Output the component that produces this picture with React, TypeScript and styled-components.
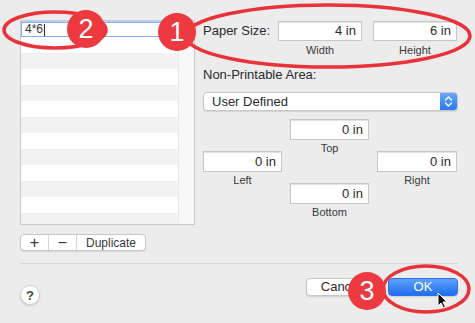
import React from "react";
import styled, { createGlobalStyle } from "styled-components";

const Global = createGlobalStyle`
  html, body { margin: 0; padding: 0; background: #ececec; }
  body { font-family: "Liberation Sans", Arial, sans-serif; color: #2a2a2a; }
  * { box-sizing: border-box; }
`;

const Window = styled.div`
  position: relative;
  width: 475px;
  height: 323px;
  overflow: hidden;
  background: #ececec;
  padding: 20px 17px 0 20px;
  display: flex;
  flex-direction: column;
`;

const MainRow = styled.div`
  display: flex;
  gap: 8px;
`;

const LeftCol = styled.div`
  width: 175px;
  display: flex;
  flex-direction: column;
`;

const ListBox = styled.div`
  height: 205px;
  border: 1px solid #cacaca;
  background: #fff;
  display: flex;
`;

const Rows = styled.div`
  flex: 1;
  display: flex;
  flex-direction: column;
  overflow: hidden;
`;

const EditRow = styled.div`
  margin-top: 1px;
  height: 16px;
  border: 1.5px solid #86aef0;
  box-shadow: 0 0 0 1px #b9d0f6;
  background: #fff;
  font-size: 12px;
  line-height: 13px;
  padding-left: 3px;
  display: flex;
  align-items: center;
  color: #333;
`;

const Caret = styled.span`
  display: inline-block;
  width: 1px;
  height: 12px;
  background: #222;
  margin-left: 1px;
`;

const Row = styled.div<{ $alt: boolean }>`
  height: 16px;
  flex: none;
  background: ${(p) => (p.$alt ? "#f2f2f2" : "#ffffff")};
`;

const Track = styled.div`
  width: 16px;
  background: #f8f8f8;
  border-left: 1px solid #e8e8e8;
`;

const Segmented = styled.div`
  margin-top: 9px;
  width: 126px;
  height: 17px;
  display: flex;
  background: #fff;
  border: 1px solid #c6c6c6;
  border-radius: 4px;
  box-shadow: 0 1px 1px rgba(0, 0, 0, 0.08);
  overflow: hidden;
`;

const Segment = styled.div<{ $w: number; $big?: boolean }>`
  width: ${(p) => p.$w}px;
  display: flex;
  align-items: center;
  justify-content: center;
  font-size: ${(p) => (p.$big ? 16 : 12)}px;
  color: #3a3a3a;
  border-right: 1px solid #d6d6d6;
  &:last-child { border-right: none; flex: 1; }
`;

const RightCol = styled.div`
  flex: 1;
  padding-top: 1px;
  display: flex;
  flex-direction: column;
`;

const PaperRow = styled.div`
  display: flex;
  align-items: flex-start;
`;

const RowLabel = styled.div`
  width: 75px;
  font-size: 13px;
  line-height: 20px;
  color: #2b2b2b;
`;

const FieldCol = styled.div<{ $w: number; $ml?: number }>`
  width: ${(p) => p.$w}px;
  margin-left: ${(p) => p.$ml ?? 0}px;
  display: flex;
  flex-direction: column;
`;

const Field = styled.div<{ $h: number }>`
  height: ${(p) => p.$h}px;
  background: #fff;
  border: 1px solid #c6c6c6;
  box-shadow: inset 0 1px 0 #e2e2e2;
  font-size: 13px;
  line-height: ${(p) => p.$h - 2}px;
  text-align: right;
  padding-right: 5px;
  color: #2b2b2b;
`;

const Caption = styled.div<{ $mt: number }>`
  margin-top: ${(p) => p.$mt}px;
  font-size: 11px;
  line-height: 14px;
  text-align: center;
  color: #3a3a3a;
`;

const SectionLabel = styled.div`
  margin-top: 11px;
  font-size: 13px;
  line-height: 14px;
  color: #2b2b2b;
`;

const Select = styled.div`
  margin-top: 10px;
  height: 19px;
  display: flex;
  background: #fff;
  border: 1px solid #c8c8c8;
  border-radius: 4px;
  box-shadow: 0 1px 1px rgba(0, 0, 0, 0.1);
  overflow: hidden;
`;

const SelectText = styled.div`
  flex: 1;
  padding-left: 8px;
  font-size: 13px;
  line-height: 17px;
  color: #2b2b2b;
`;

const Stepper = styled.div`
  width: 17px;
  background: linear-gradient(#6aa8fa, #2a78f0);
  display: flex;
  align-items: center;
  justify-content: center;
`;

const MarginGrid = styled.div`
  margin-top: 8px;
  display: grid;
  grid-template-columns: 79px 79px 80px;
  column-gap: 8px;
`;

const MarginCol = styled.div<{ $mt: number }>`
  margin-top: ${(p) => p.$mt}px;
  display: flex;
  flex-direction: column;
`;

const Spacer = styled.div<{ $h: number }>`
  height: ${(p) => p.$h}px;
`;

const Separator = styled.div`
  margin-top: 12px;
  height: 1px;
  background: #d3d3d3;
`;

const Footer = styled.div`
  display: flex;
  align-items: flex-start;
  padding-top: 14px;
`;

const Help = styled.div`
  margin-top: 7px;
  width: 20px;
  height: 20px;
  border-radius: 50%;
  background: #fff;
  border: 1px solid #cfcfcf;
  box-shadow: 0 1px 2px rgba(0, 0, 0, 0.15);
  display: flex;
  align-items: center;
  justify-content: center;
  font-size: 13px;
  font-weight: bold;
  color: #444;
`;

const Grow = styled.div`
  flex: 1;
`;

const Button = styled.div<{ $primary?: boolean }>`
  width: 70px;
  height: 18px;
  border-radius: 4px;
  font-size: 13px;
  line-height: 16px;
  text-align: center;
  margin-left: ${(p) => (p.$primary ? 12 : 0)}px;
  color: ${(p) => (p.$primary ? "#fff" : "#2b2b2b")};
  background: ${(p) =>
    p.$primary ? "linear-gradient(#5fa0fa, #1d6ff0)" : "#fff"};
  border: 1px solid ${(p) => (p.$primary ? "#2c72e6" : "#c6c6c6")};
  box-shadow: 0 1px 1px rgba(0, 0, 0, 0.12);
`;

const Overlay = styled.svg`
  position: absolute;
  left: 0;
  top: 0;
  width: 475px;
  height: 323px;
  pointer-events: none;
`;

const Badge = styled.div<{ $x: number; $y: number }>`
  position: absolute;
  left: ${(p) => p.$x - 19}px;
  top: ${(p) => p.$y - 19}px;
  width: 38px;
  height: 38px;
  border-radius: 50%;
  background: #ec3a40;
  color: #fff;
  font-family: "Liberation Sans", Arial, sans-serif;
  font-size: 27px;
  line-height: 38px;
  text-align: center;
`;

const Cursor = styled.svg`
  position: absolute;
  left: 437px;
  top: 292px;
  width: 12px;
  height: 17px;
`;

const ROWS = Array.from({ length: 12 }, (_, i) => i);

export default function App() {
  return (
    <>
      <Global />
      <Window>
        <MainRow>
          <LeftCol>
            <ListBox>
              <Rows>
                <EditRow>
                  4*6<Caret />
                </EditRow>
                {ROWS.map((i) => (
                  <Row key={i} $alt={i % 2 === 1} />
                ))}
              </Rows>
              <Track />
            </ListBox>
            <Segmented>
              <Segment $w={28} $big>+</Segment>
              <Segment $w={28} $big>−</Segment>
              <Segment $w={70}>Duplicate</Segment>
            </Segmented>
          </LeftCol>
          <RightCol>
            <PaperRow>
              <RowLabel>Paper Size:</RowLabel>
              <FieldCol $w={84}>
                <Field $h={20}>4 in</Field>
                <Caption $mt={2}>Width</Caption>
              </FieldCol>
              <FieldCol $w={84} $ml={11}>
                <Field $h={20}>6 in</Field>
                <Caption $mt={2}>Height</Caption>
              </FieldCol>
            </PaperRow>
            <SectionLabel>Non-Printable Area:</SectionLabel>
            <Select>
              <SelectText>User Defined</SelectText>
              <Stepper>
                <svg width="9" height="13" viewBox="0 0 9 13">
                  <path d="M1.5 5 L4.5 2 L7.5 5 M1.5 8 L4.5 11 L7.5 8" fill="none" stroke="#fff" strokeWidth="1.4" strokeLinecap="round" strokeLinejoin="round" />
                </svg>
              </Stepper>
            </Select>
            <MarginGrid>
              <MarginCol $mt={32}>
                <Field $h={21}>0 in</Field>
                <Caption $mt={1}>Left</Caption>
              </MarginCol>
              <MarginCol $mt={0}>
                <Field $h={21}>0 in</Field>
                <Caption $mt={1}>Top</Caption>
                <Spacer $h={28} />
                <Field $h={21}>0 in</Field>
                <Caption $mt={1}>Bottom</Caption>
              </MarginCol>
              <MarginCol $mt={32}>
                <Field $h={21}>0 in</Field>
                <Caption $mt={1}>Right</Caption>
              </MarginCol>
            </MarginGrid>
          </RightCol>
        </MainRow>
        <Separator />
        <Footer>
          <Help>?</Help>
          <Grow />
          <Button>Cancel</Button>
          <Button $primary>OK</Button>
        </Footer>

        <Overlay viewBox="0 0 475 323">
          <ellipse cx="55" cy="30" rx="51" ry="18" fill="none" stroke="#e8333b" strokeWidth="3.5" />
          <ellipse cx="328" cy="36" rx="142" ry="31" fill="none" stroke="#e8333b" strokeWidth="3.5" />
          <ellipse cx="426" cy="289" rx="43" ry="23" fill="none" stroke="#e8333b" strokeWidth="3.5" />
        </Overlay>
        <Badge $x={86} $y={29}>2</Badge>
        <Badge $x={177} $y={32}>1</Badge>
        <Badge $x={367} $y={291}>3</Badge>
        <Cursor viewBox="0 0 12 17">
          <path d="M1 1 L1 14 L4 11 L6.5 16 L8.5 15 L6 10 L10 10 Z" fill="#111" stroke="#fff" strokeWidth="1" />
        </Cursor>
      </Window>
    </>
  );
}
